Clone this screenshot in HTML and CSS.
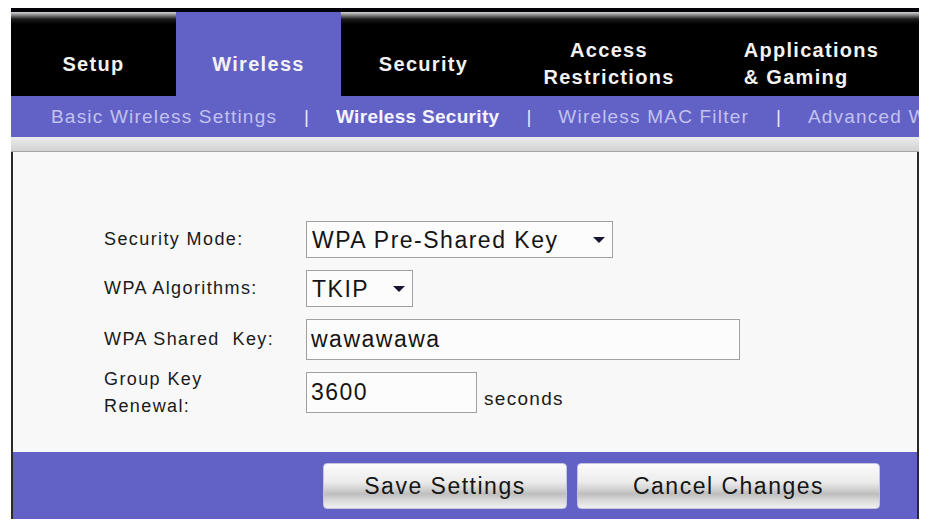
FILE: index.html
```html
<!DOCTYPE html>
<html lang="en">
<head>
    <meta charset="UTF-8">
    <meta name="viewport" content="width=device-width, initial-scale=1.0">
    <title>Wireless Security</title>
    <link rel="stylesheet" href="styles.css">
</head>
<body>
    <div class="page">
        <nav class="tabs">
            <a class="tab" href="#">Setup</a>
            <a class="tab active" href="#">Wireless</a>
            <a class="tab" href="#">Security</a>
            <a class="tab" href="#">Access<br>Restrictions</a>
            <a class="tab" href="#"><span class="tab-left">Applications<br>&amp; Gaming</span></a>
        </nav>

        <div class="subnav">
            <a href="#">Basic Wireless Settings</a>
            <span class="sep">|</span>
            <a class="current" href="#">Wireless Security</a>
            <span class="sep">|</span>
            <a href="#">Wireless MAC Filter</a>
            <span class="sep">|</span>
            <a href="#">Advanced Wireless Settings</a>
        </div>

        <div class="shade"></div>

        <div class="panel">
            <form class="settings" id="securityForm">
                <label for="securityMode">Security Mode:</label>
                <div class="select-wrap mode">
                    <select id="securityMode" name="securityMode">
                        <option>WPA Pre-Shared Key</option>
                        <option>WPA RADIUS</option>
                        <option>WEP</option>
                        <option>Disabled</option>
                    </select>
                    <svg class="arrow" width="12" height="6" viewBox="0 0 12 6"><path d="M0 0H12L6 6Z"/></svg>
                </div>

                <label for="algorithms">WPA Algorithms:</label>
                <div class="select-wrap algo">
                    <select id="algorithms" name="algorithms">
                        <option>TKIP</option>
                        <option>AES</option>
                    </select>
                    <svg class="arrow" width="12" height="6" viewBox="0 0 12 6"><path d="M0 0H12L6 6Z"/></svg>
                </div>

                <label for="sharedKey">WPA Shared&nbsp; Key:</label>
                <div>
                    <input class="key" type="text" id="sharedKey" name="sharedKey" value="wawawawa">
                </div>

                <label class="two-line" for="renewal">Group Key<br>Renewal:</label>
                <div class="with-unit">
                    <input class="renewal" type="text" id="renewal" name="renewal" value="3600">
                    <span class="unit">seconds</span>
                </div>
            </form>

            <div class="footer">
                <button type="submit" form="securityForm">Save Settings</button>
                <button type="button" class="wide">Cancel Changes</button>
            </div>
        </div>
    </div>
</body>
</html>
```

FILE: styles.css
```css
body {
    margin: 0;
    background-color: #ffffff;
    font-family: "Liberation Sans", Arial, sans-serif;
    color: #1a1a1a;
}

.page {
    width: 908px;
    margin: 8px 0 0 11px;
}

/* top tabs */
.tabs {
    display: grid;
    grid-template-columns: 165px 165px 165px 206px 1fr;
    background-color: #020208;
    padding-top: 4px;
}

.tab {
    display: flex;
    align-items: center;
    justify-content: center;
    height: 84px;
    padding-top: 20px;
    box-sizing: border-box;
    background: linear-gradient(#d4d4d4 0, #8a8a8a 3px, #1c1c1c 7px, #000000 12px);
    color: #f2f2f2;
    font-size: 20px;
    font-weight: bold;
    letter-spacing: 1.3px;
    line-height: 27px;
    text-align: center;
    text-decoration: none;
}

.tab.active {
    background: #6161c6;
}

.tab-left {
    text-align: left;
    margin-right: 8px;
}

/* sub tabs */
.subnav {
    display: flex;
    align-items: center;
    height: 41px;
    padding-left: 40px;
    background-color: #6161c6;
    white-space: nowrap;
    overflow: hidden;
    font-size: 19px;
}

.subnav a {
    color: #c2c2f0;
    text-decoration: none;
    letter-spacing: 1.2px;
}

.subnav a.current {
    color: #f4f4ff;
    font-weight: bold;
    letter-spacing: 0.3px;
}

.subnav .sep {
    color: #e8e8ff;
    margin: 0 27px;
}

.shade {
    height: 14px;
    background: linear-gradient(#ececec, #d2d2d2);
    border-bottom: 1px solid #a4a4a4;
}

/* content */
.panel {
    border-left: 2px solid #2a2a2a;
    border-right: 2px solid #2a2a2a;
}

.settings {
    display: grid;
    grid-template-columns: 202px auto;
    row-gap: 12px;
    align-items: center;
    padding: 69px 0 39px 91px;
    background-color: #f8f8f8;
}

label {
    font-size: 18px;
    letter-spacing: 1.4px;
    line-height: 27px;
}

label.two-line {
    margin: -7px 0;
}

.select-wrap {
    position: relative;
    height: 37px;
}

.select-wrap.mode {
    width: 307px;
}

.select-wrap.algo {
    width: 107px;
}

select,
input[type="text"] {
    height: 100%;
    width: 100%;
    box-sizing: border-box;
    padding: 0 0 0 5px;
    border: 1px solid #a0a0a0;
    border-radius: 0;
    background-color: #fcfcfc;
    color: #141414;
    font-family: "Liberation Sans", Arial, sans-serif;
    font-size: 23px;
    letter-spacing: 1.5px;
    appearance: none;
    -webkit-appearance: none;
    outline: none;
}

.arrow {
    position: absolute;
    right: 8px;
    top: 16px;
    fill: #161634;
    pointer-events: none;
}

input[type="text"] {
    height: 41px;
    padding-left: 4px;
}

input.key {
    width: 434px;
}

input.renewal {
    width: 171px;
}

.with-unit {
    display: flex;
    align-items: flex-end;
    gap: 7px;
}

.unit {
    font-size: 19px;
    letter-spacing: 1.3px;
    line-height: 18px;
    margin-bottom: 5px;
}

/* buttons bar */
.footer {
    display: flex;
    justify-content: flex-end;
    gap: 10px;
    height: 67px;
    padding: 11px 37px 0 0;
    box-sizing: border-box;
    background-color: #6161c6;
}

button {
    width: 244px;
    height: 46px;
    border: 1px solid #c4c4dc;
    border-radius: 4px;
    background: linear-gradient(#fbfbfb 0%, #ececec 40%, #d6d6d6 55%, #bebebe 68%, #d8d8d8 82%, #f0f0f0 100%);
    color: #161616;
    font-family: "Liberation Sans", Arial, sans-serif;
    font-size: 23px;
    letter-spacing: 1.5px;
    cursor: pointer;
}

button.wide {
    width: 303px;
}
```
